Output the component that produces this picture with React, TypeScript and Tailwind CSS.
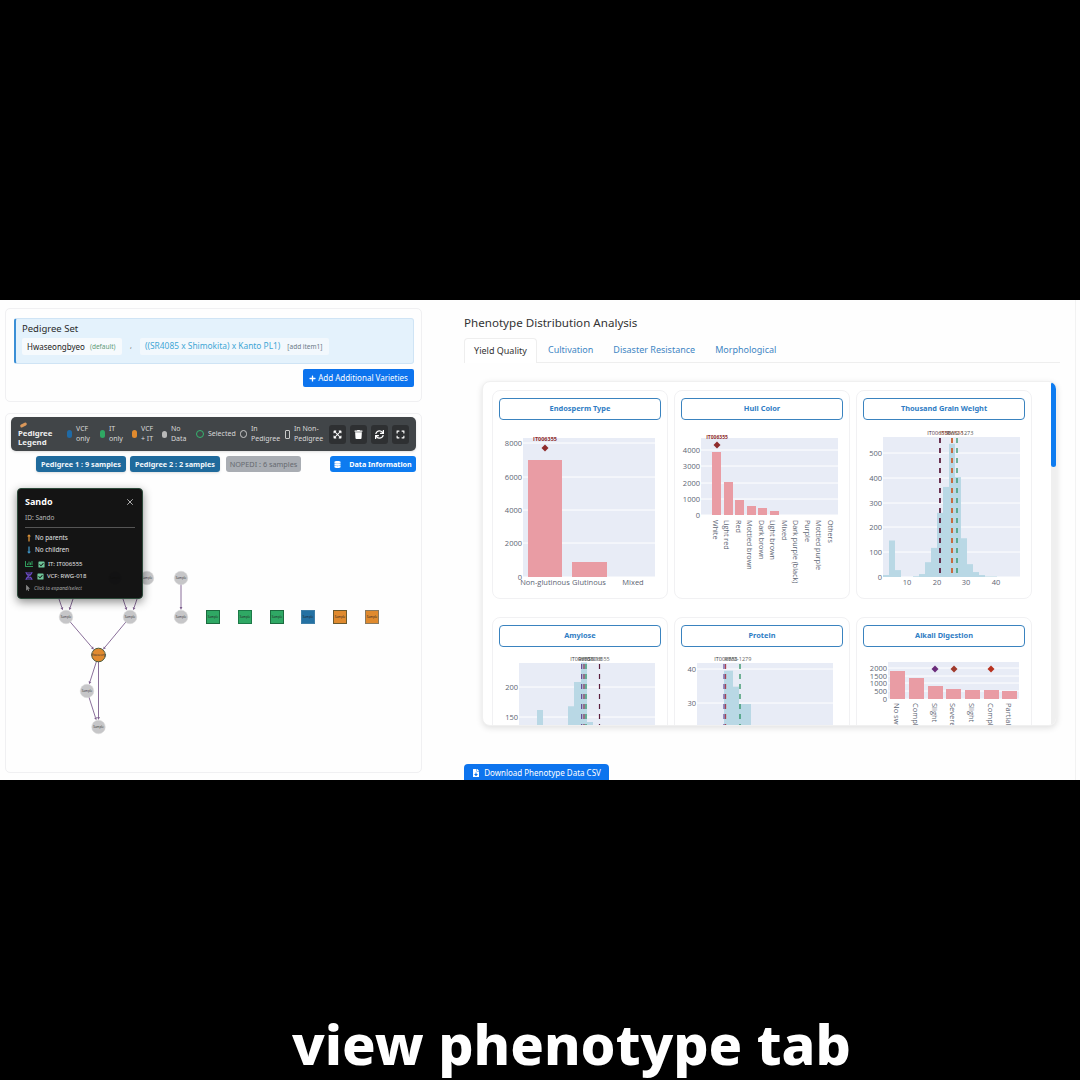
import React from "react";
import {
  FaPlus,
  FaExpandArrowsAlt,
  FaTrash,
  FaSync,
  FaExpand,
  FaDatabase,
  FaLongArrowAltUp,
  FaLongArrowAltDown,
  FaChartBar,
  FaDna,
  FaCheckSquare,
  FaMousePointer,
  FaFileDownload,
} from "react-icons/fa";
import { FiX } from "react-icons/fi";

const AXIS = "#5c6573";
const PLOT = "#e8ecf6";
const BAR = "#e99ca4";
const HIST = "#b9d8e5";

// ---- chart pieces, drawn in page coordinates through the viewBox ----

function Grid({ x0, x1, ys }: { x0: number; x1: number; ys: [number, string][] }) {
  return (
    <>
      {ys.map(([y, label]) => (
        <g key={label}>
          <line x1={x0} x2={x1} y1={y} y2={y} stroke="#ffffff" strokeWidth={1} />
          <text x={x0 - 1} y={y + 3} fontSize={7.5} fill={AXIS} textAnchor="end">
            {label}
          </text>
        </g>
      ))}
    </>
  );
}

function Diamond({ x, y, fill }: { x: number; y: number; fill: string }) {
  return <polygon points={`${x},${y - 3.5} ${x + 3.5},${y} ${x},${y + 3.5} ${x - 3.5},${y}`} fill={fill} />;
}

function Dash({ x, y0, y1, color, width = 1.8 }: { x: number; y0: number; y1: number; color: string; width?: number }) {
  return <line x1={x} x2={x} y1={y0} y2={y1} stroke={color} strokeWidth={width} strokeDasharray="5 5" />;
}

function Hist({ bars, base, scale }: { bars: [number, number, number][]; base: number; scale: number }) {
  return (
    <>
      {bars.map(([x, w, v]) => (
        <rect key={x} x={x} y={base - v * scale} width={w} height={v * scale} fill={HIST} />
      ))}
    </>
  );
}

function ChartSvg({ x, y, children }: { x: number; y: number; children: React.ReactNode }) {
  return (
    <svg
      width={174}
      height={170}
      viewBox={`${x} ${y} 174 170`}
      className="block mt-[5px]"
      style={{ fontFamily: '"Open Sans", sans-serif' }}
    >
      {children}
    </svg>
  );
}

function EndospermChart() {
  return (
    <ChartSvg x={493} y={425}>
      <rect x={523} y={438} width={132} height={139} fill={PLOT} />
      <Grid x0={523} x1={655} ys={[[443, "8000"], [477, "6000"], [510, "4000"], [543, "2000"], [577, "0"]]} />
      <rect x={528} y={460} width={34} height={117} fill={BAR} />
      <rect x={572} y={562} width={35} height={15} fill={BAR} />
      <text x={545} y={441} fontSize={5.5} fontWeight={700} fill="#8f2c2c" textAnchor="middle">IT006355</text>
      <Diamond x={545} y={448} fill="#8f2c2c" />
      <text x={545} y={585} fontSize={7.5} fill={AXIS} textAnchor="middle">Non-glutinous</text>
      <text x={589} y={585} fontSize={7.5} fill={AXIS} textAnchor="middle">Glutinous</text>
      <text x={633} y={585} fontSize={7.5} fill={AXIS} textAnchor="middle">Mixed</text>
    </ChartSvg>
  );
}

const hullBars: [number, number][] = [[711, 452], [723, 482], [734, 500], [746, 506], [757, 508], [769, 511]];
const hullLabels: [number, string][] = [
  [716, "White"], [727, "Light red"], [739, "Red"], [750, "Mottled brown"], [762, "Dark brown"],
  [773, "Light brown"], [785, "Mixed"], [796, "Dark purple (black)"], [808, "Purple"],
  [819, "Mottled purple"], [831, "Others"],
];

function HullChart() {
  return (
    <ChartSvg x={674} y={425}>
      <rect x={700} y={438} width={137} height={77} fill={PLOT} />
      <Grid x0={700} x1={837} ys={[[450, "4000"], [466, "3000"], [483, "2000"], [499, "1000"], [515, "0"]]} />
      {hullBars.map(([x, top]) => (
        <rect key={x} x={x} y={top} width={9} height={515 - top} fill={BAR} />
      ))}
      <text x={716} y={439} fontSize={5} fontWeight={700} fill="#8f2c2c" textAnchor="middle">IT006355</text>
      <Diamond x={716} y={445} fill="#8f2c2c" />
      {hullLabels.map(([x, label]) => (
        <text key={label} x={x - 4.5} y={520} fontSize={7.2} fill={AXIS} transform={`rotate(90 ${x - 4.5} 520)`}>
          {label}
        </text>
      ))}
    </ChartSvg>
  );
}

const grainBars: [number, number, number][] = [
  [882, 6, 8], [888, 6, 148], [894, 6, 28], [912, 6, 3], [918, 6, 12], [924, 6, 60], [930, 6, 118],
  [936, 6, 260], [942, 6, 365], [948, 6, 540], [954, 6, 405], [960, 6, 157], [966, 6, 52],
  [972, 6, 20], [978, 6, 8], [984, 12, 2],
];

function GrainChart() {
  return (
    <ChartSvg x={856} y={425}>
      <rect x={882} y={437} width={137} height={140} fill={PLOT} />
      <Grid x0={882} x1={1019} ys={[[453, "500"], [478, "400"], [503, "300"], [527, "200"], [552, "100"], [577, "0"]]} />
      <Hist bars={grainBars} base={577} scale={0.2467} />
      <Dash x={939} y0={438} y1={577} color="#5c1f3f" />
      <Dash x={951} y0={438} y1={577} color="#c8602f" />
      <Dash x={956} y0={438} y1={577} color="#1f8a55" width={1.2} />
      <text x={938} y={435} fontSize={5.5} fill="#4a2a3a" textAnchor="middle">IT006555</text>
      <text x={951} y={435} fontSize={5.5} fill="#b4552f" textAnchor="middle">IT006555</text>
      <text x={959} y={435} fontSize={5.5} fill="#555555" textAnchor="middle">RWG-1273</text>
      {[[906, "10"], [936, "20"], [965, "30"], [995, "40"]].map(([x, l]) => (
        <text key={l} x={x} y={585} fontSize={7.5} fill={AXIS} textAnchor="middle">{l}</text>
      ))}
    </ChartSvg>
  );
}

const amyloseBars: [number, number, number][] = [
  [537, 6, 60], [568, 6, 75], [574, 7, 172], [581, 6, 250], [587, 6, 12],
];

function AmyloseChart() {
  return (
    <ChartSvg x={493} y={652}>
      <rect x={519} y={663} width={136} height={70} fill={PLOT} />
      <Grid x0={519} x1={655} ys={[[687, "200"], [717, "150"]]} />
      <Hist bars={amyloseBars} base={725} scale={0.25} />
      <Dash x={581.7} y0={664} y1={733} color="#5b3a8c" width={1.1} />
      <Dash x={584} y0={664} y1={733} color="#7a1f3f" width={1.1} />
      <Dash x={586} y0={664} y1={733} color="#1f8a55" width={1.1} />
      <Dash x={599.5} y0={664} y1={733} color="#5c1f3f" width={1.2} />
      <text x={582} y={661} fontSize={5.5} fill="#444444" textAnchor="middle">IT006555</text>
      <text x={590} y={661} fontSize={5.5} fill="#444444" textAnchor="middle">RWG-018</text>
      <text x={598} y={661} fontSize={5.5} fill="#666666" textAnchor="middle">IT006555</text>
    </ChartSvg>
  );
}

const proteinBars: [number, number, number][] = [[723, 9, 163], [732, 6, 115], [738, 12, 63]];

function ProteinChart() {
  return (
    <ChartSvg x={674} y={652}>
      <rect x={696} y={663} width={136} height={70} fill={PLOT} />
      <Grid x0={696} x1={832} ys={[[669, "40"], [703, "30"]]} />
      <Hist bars={proteinBars} base={725} scale={0.333} />
      <Dash x={723} y0={664} y1={733} color="#5b3a8c" width={1.1} />
      <Dash x={724.6} y0={664} y1={733} color="#a83a4a" width={1.1} />
      <Dash x={739} y0={664} y1={733} color="#1f8a55" width={1.2} />
      <text x={725} y={661} fontSize={5.5} fill="#444444" textAnchor="middle">IT006555</text>
      <text x={737} y={661} fontSize={5.5} fill="#666666" textAnchor="middle">RWG-1279</text>
    </ChartSvg>
  );
}

const alkaliBars: [number, number, string][] = [
  [889, 671, "No swelling"], [908, 678, "Complete"], [927, 686, "Slight"], [945, 689, "Severe"],
  [964, 690, "Slight"], [983, 690, "Complete"], [1001, 691, "Partial"],
];

function AlkaliChart() {
  return (
    <ChartSvg x={856} y={652}>
      <rect x={887} y={662} width={131} height={37} fill={PLOT} />
      <Grid x0={887} x1={1018} ys={[[668, "2000"], [676, "1500"], [683, "1000"], [691, "500"], [699, "0"]]} />
      {alkaliBars.map(([x, top]) => (
        <rect key={x} x={x} y={top} width={15} height={699 - top} fill={BAR} />
      ))}
      <Diamond x={934} y={669} fill="#6a2c7a" />
      <Diamond x={953} y={669} fill="#a03a2c" />
      <Diamond x={990} y={669} fill="#b8321f" />
      {alkaliBars.map(([x, , label]) => (
        <text key={x} x={x + 4} y={703} fontSize={7.5} fill={AXIS} transform={`rotate(90 ${x + 4} 703)`}>
          {label}
        </text>
      ))}
    </ChartSvg>
  );
}

function ChartCard({ title, children }: { title: string; children: React.ReactNode }) {
  return (
    <div className="h-[209px] rounded-lg border border-[#f1f1f3] bg-white pt-[7px] overflow-visible">
      <div className="mx-[6px] h-[22px] rounded-[4px] border border-[#3a83bf] flex items-center justify-center text-[7.4px] font-bold text-[#2f7dc4]">
        {title}
      </div>
      {children}
    </div>
  );
}

// ---- left side ----

function LegendText({ children }: { children: React.ReactNode }) {
  return <span className="text-[7px] leading-[10px] text-[#d8d8d8]">{children}</span>;
}

function LegendItem({ width, mark, lines }: { width: string; mark: React.ReactNode; lines: string[] }) {
  return (
    <div className={`${width} flex items-center gap-[4px] shrink-0`}>
      {mark}
      <LegendText>
        {lines.map((l) => (
          <span key={l} className="block">{l}</span>
        ))}
      </LegendText>
    </div>
  );
}

function ToolButton({ children }: { children: React.ReactNode }) {
  return (
    <div className="w-[17px] h-[19px] rounded-[3px] bg-[#2e3032] flex items-center justify-center text-white text-[9px]">
      {children}
    </div>
  );
}

function Legend() {
  return (
    <div className="h-[34px] rounded-[5px] bg-[#414548] flex items-center pl-[7px] shadow-sm">
      <div className="w-[49px] shrink-0 text-[7.8px] leading-[9px] font-bold text-[#eeeeee]">
        <svg width="9" height="6" viewBox="0 0 9 6" className="block mb-[1px] ml-[1px]">
          <rect x="1" y="1.5" width="7" height="3" rx="1.5" fill="#d9975a" transform="rotate(-28 4.5 3)" />
        </svg>
        Pedigree
        <br />
        Legend
      </div>
      <LegendItem width="w-[33px]" mark={<span className="w-[5px] h-[8px] rounded-full bg-[#1f6aa5]" />} lines={["VCF", "only"]} />
      <LegendItem width="w-[32px]" mark={<span className="w-[5px] h-[8px] rounded-full bg-[#2fa864]" />} lines={["IT", "only"]} />
      <LegendItem width="w-[30px]" mark={<span className="w-[5px] h-[8px] rounded-full bg-[#e08a2e]" />} lines={["VCF", "+ IT"]} />
      <LegendItem width="w-[33px]" mark={<span className="w-[5px] h-[7px] rounded-full bg-[#b8b8b8]" />} lines={["No", "Data"]} />
      <LegendItem width="w-[45px]" mark={<span className="w-[8px] h-[8px] rounded-full border-[1.5px] border-[#35b56f] ml-[1px]" />} lines={["Selected"]} />
      <LegendItem width="w-[45px]" mark={<span className="w-[7px] h-[8px] rounded-full border border-[#c8c8c8]" />} lines={["In", "Pedigree"]} />
      <LegendItem width="w-[45px]" mark={<span className="w-[5px] h-[9px] rounded-[1px] border border-[#c8c8c8]" />} lines={["In Non-", "Pedigree"]} />
      <div className="flex gap-[4px] -ml-[1px]">
        <ToolButton><FaExpandArrowsAlt /></ToolButton>
        <ToolButton><FaTrash /></ToolButton>
        <ToolButton><FaSync /></ToolButton>
        <ToolButton><FaExpand /></ToolButton>
      </div>
    </div>
  );
}

const grayNodes: [number, number][] = [
  [115, 579], [147, 579], [181, 579], [66, 618], [130, 618], [181, 618], [87, 692], [98.5, 728],
];
const edges: [number, number, number, number][] = [
  [181, 579, 181, 618], [59, 600, 65, 618], [73, 600, 67, 618], [123, 600, 129, 618], [137, 600, 131, 618],
  [66, 618, 98.5, 656], [130, 618, 98.5, 656], [98.5, 656, 87, 692], [87, 692, 98.5, 728], [98.5, 656, 98.5, 728],
];
const squares: [number, string, string][] = [
  [213, "#2fa864", "#1c6b3f"], [245, "#2fa864", "#1c7a48"], [277, "#2fa864", "#1c6b3f"],
  [308, "#2471a3", "#3f7fa8"], [340, "#e08a2e", "#6b5a2e"], [372, "#e08a2e", "#8a7a60"],
];

// stops an edge at the rim of its target node, arrowhead included
function Edge({ x1, y1, x2, y2 }: { x1: number; y1: number; x2: number; y2: number }) {
  const len = Math.hypot(x2 - x1, y2 - y1);
  const ux = (x2 - x1) / len;
  const uy = (y2 - y1) / len;
  const tx = x2 - ux * 7;
  const ty = y2 - uy * 7;
  const bx = tx - ux * 3;
  const by = ty - uy * 3;
  return (
    <g>
      <line x1={x1} y1={y1} x2={bx} y2={by} stroke="#7d5f8e" strokeWidth={0.9} />
      <polygon
        points={`${tx},${ty} ${bx - uy * 1.4},${by + ux * 1.4} ${bx + uy * 1.4},${by - ux * 1.4}`}
        fill="#7d5f8e"
      />
    </g>
  );
}

function PedigreeGraph() {
  return (
    <svg width={415} height={301} viewBox="6 472 415 301" className="block" style={{ fontFamily: '"Open Sans", sans-serif' }}>
      {edges.map(([x1, y1, x2, y2]) => (
        <Edge key={`${x1}-${y1}-${x2}-${y2}`} x1={x1} y1={y1} x2={x2} y2={y2} />
      ))}
      {grayNodes.map(([x, y]) => (
        <g key={`${x}-${y}`}>
          <circle cx={x} cy={y} r={6.8} fill="#c6c6c8" stroke="#d8d8d8" strokeWidth={0.5} />
          <text x={x} y={y + 1} fontSize={3} fill="#333333" textAnchor="middle">Sample</text>
        </g>
      ))}
      <circle cx={98.5} cy={656} r={6.8} fill="#e08a2e" stroke="#4a5a3a" strokeWidth={1} />
      <text x={98.5} y={657} fontSize={3} fill="#333333" textAnchor="middle">Hwaseong</text>
      {squares.map(([x, fill, stroke]) => (
        <g key={x}>
          <rect x={x - 6.5} y={611.5} width={13} height={13} fill={fill} stroke={stroke} strokeWidth={1} />
          <text x={x} y={619} fontSize={3} fill="#222222" textAnchor="middle">Sample</text>
        </g>
      ))}
    </svg>
  );
}

function NodePopover() {
  return (
    <div className="absolute left-[11px] top-[17px] w-[126px] h-[111px] rounded-[4px] bg-[#0c0c0c]/[0.97] shadow-[0_3px_10px_rgba(0,0,0,0.45)] border border-[#2c4a3a] px-[7px] pt-[6px] text-[#e4e4e4]">
      <div className="flex items-center justify-between">
        <span className="text-[9px] leading-[14px] font-bold text-white">Sando</span>
        <FiX className="text-[#cccccc] text-[10px]" />
      </div>
      <div className="text-[6.5px] leading-[9px] mt-[4px] text-[#b8b8b8]">ID: Sando</div>
      <div className="border-t border-[#555555] mt-[5px] pt-[4px] text-[6.3px] leading-[12px] flex flex-col">
        <div className="flex items-center gap-[2px]"><FaLongArrowAltUp className="text-[#e0963c] text-[8px]" />No parents</div>
        <div className="flex items-center gap-[2px]"><FaLongArrowAltDown className="text-[#3f94c4] text-[8px]" />No children</div>
        <div className="flex items-center gap-[3px] mt-[2px] text-[6px]">
          <FaChartBar className="text-[#2f9c5c] text-[8px]" />
          <FaCheckSquare className="text-[#6fc79a] text-[7px] ml-[2px]" />IT: IT006555
        </div>
        <div className="flex items-center gap-[3px] text-[6px]">
          <FaDna className="text-[#6a4bc4] text-[8px]" />
          <FaCheckSquare className="text-[#6fc79a] text-[7px] ml-[1px]" />VCF: RWG-018
        </div>
        <div className="flex items-center gap-[3px] text-[5px] italic text-[#a8a8a8]">
          <FaMousePointer className="text-[#888888] text-[6px]" />Click to expand/select
        </div>
      </div>
    </div>
  );
}

function LeftColumn() {
  return (
    <div className="w-[430px] shrink-0 pl-[5px] pr-[8px] pt-[8px]">
      <div className="h-[94px] rounded-[5px] border border-[#f0f0f2] pl-[8px] pr-[7px] pt-[9px]">
        <div className="h-[46px] rounded-[3px] bg-[#e4f2fc] border border-[#cfe4f5] border-l-2 border-l-[#3a8fd6] pl-[6px] pt-[3px]">
          <div className="text-[9.5px] leading-[14px] text-[#2a2a2a]">Pedigree Set</div>
          <div className="flex items-center mt-[2px]">
            <div className="h-[17px] w-[100px] rounded-[2px] bg-[#f6fafd] flex items-center pl-[5px] gap-[5px]">
              <span className="text-[8px] text-[#222222]">Hwaseongbyeo</span>
              <span className="text-[6.5px] text-[#5f9a78]">(default)</span>
            </div>
            <span className="w-[18px] text-center text-[7px] text-[#666666]">,</span>
            <div className="h-[17px] w-[189px] rounded-[2px] bg-[#f2f8fd] flex items-center pl-[5px] gap-[7px]">
              <span className="text-[8.4px] text-[#3fa7d6]">((SR4085 x Shimokita) x Kanto PL1)</span>
              <span className="text-[6.5px] text-[#6c7a86]">[add item1]</span>
            </div>
          </div>
        </div>
        <div className="flex justify-end mt-[5px]">
          <div className="w-[111px] h-[18px] rounded-[2px] bg-[#0d74ee] flex items-center justify-center gap-[2px] text-white text-[8px]">
            <FaPlus className="text-[7px]" />Add Additional Varieties
          </div>
        </div>
      </div>
      <div className="mt-[11px] h-[360px] rounded-[5px] border border-[#f0f0f2]">
        <div className="px-[5px] pt-[3px]">
          <Legend />
          <div className="flex items-center mt-[5px] pl-[25px] text-[7.3px] font-bold">
            <div className="w-[90px] h-[16px] rounded-[3px] bg-[#1f6a9c] text-[#f0f6fa] flex items-center justify-center shadow-sm">Pedigree 1 : 9 samples</div>
            <div className="w-[90px] h-[16px] rounded-[3px] bg-[#1f6a9c] text-[#f0f6fa] flex items-center justify-center ml-[4px] shadow-sm">Pedigree 2 : 2 samples</div>
            <div className="w-[75px] h-[16px] rounded-[3px] bg-[#a9adb3] text-[#666a70] font-normal flex items-center justify-center ml-[6px]">NOPEDI : 6 samples</div>
            <div className="w-[86px] h-[16px] rounded-[3px] bg-[#0d7bf0] text-white text-[7.2px] flex items-center justify-center gap-[8px] ml-[29px]">
              <FaDatabase className="text-[7px]" />Data Information
            </div>
          </div>
        </div>
        <div className="relative -mt-[1px]">
          <PedigreeGraph />
          <NodePopover />
        </div>
      </div>
    </div>
  );
}

// ---- right side ----

function RightColumn() {
  return (
    <div className="w-[646px] shrink-0 pl-[34px] pr-[15px] pt-[15px] border-r border-[#f2f2f2]">
      <div className="text-[11.6px] leading-[16px] text-[#333333]">Phenotype Distribution Analysis</div>
      <div className="flex h-[25px] mt-[7px] border-b border-[#eeeeee] text-[9px]">
        <div className="w-[73px] h-[25px] rounded-t-[4px] border border-b-0 border-[#eeeeee] bg-white flex items-center justify-center text-[#333333]">Yield Quality</div>
        <div className="ml-[11px] flex items-center text-[#3f86c4]">Cultivation</div>
        <div className="ml-[20px] flex items-center text-[#3f86c4]">Disaster Resistance</div>
        <div className="ml-[20px] flex items-center text-[#3f86c4]">Morphological</div>
      </div>
      <div className="mt-[18px] ml-[18px] w-[575px] h-[345px] rounded-lg border border-[#f0f0f0] shadow-[0_2px_6px_rgba(0,0,0,0.12)] bg-white flex overflow-hidden">
        <div className="flex-1 pl-[9px] pt-[8px] grid grid-cols-[176px_176px_176px] gap-x-[6px] gap-y-[18px] content-start">
          <ChartCard title="Endosperm Type"><EndospermChart /></ChartCard>
          <ChartCard title="Hull Color"><HullChart /></ChartCard>
          <ChartCard title="Thousand Grain Weight"><GrainChart /></ChartCard>
          <ChartCard title="Amylose"><AmyloseChart /></ChartCard>
          <ChartCard title="Protein"><ProteinChart /></ChartCard>
          <ChartCard title="Alkali Digestion"><AlkaliChart /></ChartCard>
        </div>
        <div className="w-[5px] h-full bg-[#efefef] shrink-0">
          <div className="w-[5px] h-[85px] rounded-full bg-[#0d7bf0]" />
        </div>
      </div>
      <div className="mt-[38px] w-[145px] h-[20px] rounded-t-[4px] bg-[#0d74ee] flex items-center justify-center gap-[4px] text-white text-[8px] pb-[2px]">
        <FaFileDownload className="text-[8px]" />Download Phenotype Data CSV
      </div>
    </div>
  );
}

export default function App() {
  return (
    <div
      className="w-[1080px] h-[1080px] bg-black flex flex-col overflow-hidden"
      style={{ fontFamily: '"Noto Sans", sans-serif' }}
    >
      <div className="h-[300px] shrink-0" />
      <div className="h-[480px] shrink-0 bg-[#fefefe] flex overflow-hidden">
        <LeftColumn />
        <RightColumn />
      </div>
      <div className="flex-1 flex justify-center pt-[236px] pl-[63px]">
        <span className="text-[55.6px] leading-[56px] font-extrabold text-white">view phenotype tab</span>
      </div>
    </div>
  );
}
